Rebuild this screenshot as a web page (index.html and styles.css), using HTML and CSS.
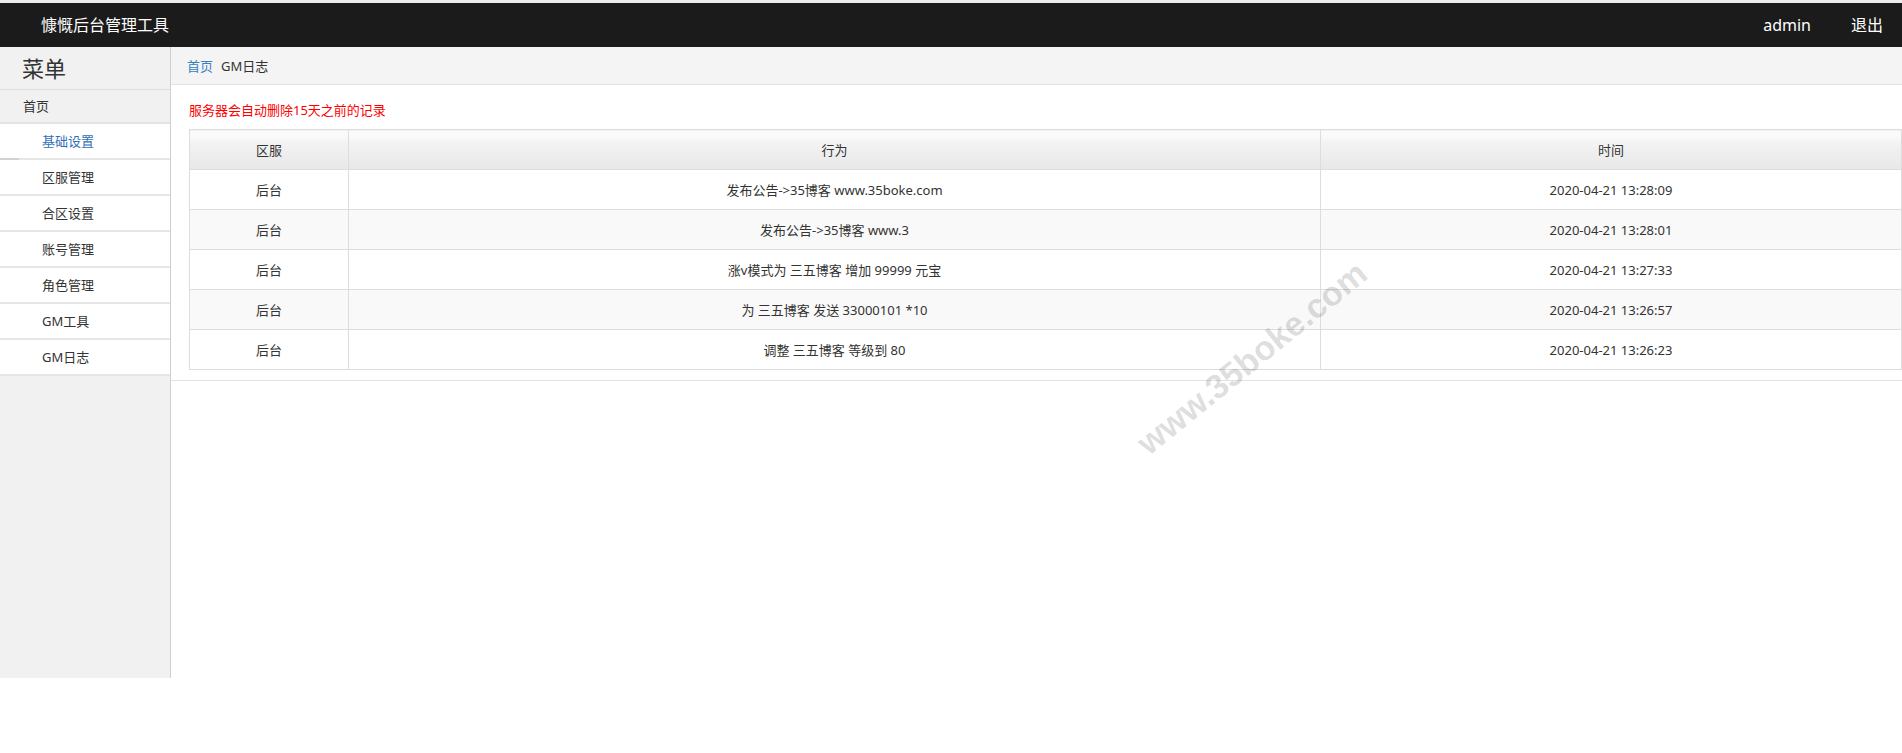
FILE: index.html
```html
<!DOCTYPE html>
<html lang="zh-CN">
<head>
<meta charset="utf-8">
<title>慷慨后台管理工具</title>
<link rel="stylesheet" href="styles.css">
</head>
<body>
<header class="topbar">
  <div class="brand">慷慨后台管理工具</div>
  <nav class="user-nav">
    <span class="user-name">admin</span>
    <a class="logout" href="#">退出</a>
  </nav>
</header>
<div class="layout">
  <aside class="sidebar">
    <div class="menu-title">菜单</div>
    <div class="menu-home">首页</div>
    <ul class="menu-list">
      <li class="menu-item active">基础设置</li>
      <li class="menu-item">区服管理</li>
      <li class="menu-item">合区设置</li>
      <li class="menu-item">账号管理</li>
      <li class="menu-item">角色管理</li>
      <li class="menu-item">GM工具</li>
      <li class="menu-item">GM日志</li>
    </ul>
  </aside>
  <main class="main">
    <div class="breadcrumb">
      <a class="crumb-link" href="#">首页</a>
      <span class="crumb-current">GM日志</span>
    </div>
    <section class="panel">
      <p class="notice">服务器会自动删除15天之前的记录</p>
      <table class="log-table">
        <thead>
          <tr>
            <th class="col-zone">区服</th>
            <th class="col-action">行为</th>
            <th class="col-time">时间</th>
          </tr>
        </thead>
        <tbody>
          <tr><td>后台</td><td>发布公告-&gt;35博客 www.35boke.com</td><td>2020-04-21 13:28:09</td></tr>
          <tr><td>后台</td><td>发布公告-&gt;35博客 www.3</td><td>2020-04-21 13:28:01</td></tr>
          <tr><td>后台</td><td>涨v模式为 三五博客 增加 99999 元宝</td><td>2020-04-21 13:27:33</td></tr>
          <tr><td>后台</td><td>为 三五博客 发送 33000101 *10</td><td>2020-04-21 13:26:57</td></tr>
          <tr><td>后台</td><td>调整 三五博客 等级到 80</td><td>2020-04-21 13:26:23</td></tr>
        </tbody>
      </table>
    </section>
  </main>
</div>
<div class="watermark">www.35boke.com</div>
</body>
</html>
```

FILE: styles.css
```css
* {
  box-sizing: border-box;
}

html, body {
  margin: 0;
  padding: 0;
  background: #ffffff;
}

body {
  font-family: "Noto Sans", "Noto Sans CJK SC", sans-serif;
  font-size: 13px;
  color: #333333;
  border-top: 3px solid #ececec;
  position: relative;
  min-height: 750px;
}

a {
  text-decoration: none;
}

.topbar {
  height: 44px;
  background: #1b1b1b;
  color: #ffffff;
  display: flex;
  align-items: center;
  justify-content: space-between;
  padding: 0 19px 0 41px;
}

.brand {
  font-size: 16px;
  line-height: 20px;
}

.user-nav {
  display: flex;
  align-items: center;
  gap: 40px;
  font-size: 16px;
  line-height: 20px;
}

.logout {
  color: #ffffff;
}

.layout {
  display: flex;
  align-items: flex-start;
}

.sidebar {
  width: 171px;
  flex: none;
  height: 631px;
  background: #f1f1f1;
  border-right: 1px solid #cfcfcf;
}

.menu-title {
  height: 43px;
  line-height: 42px;
  font-size: 22px;
  padding-left: 22px;
  border-bottom: 1px solid #dedede;
}

.menu-home {
  height: 34px;
  line-height: 32px;
  padding-left: 23px;
  border-bottom: 2px solid #e4e4e4;
}

.menu-list {
  list-style: none;
  margin: 0;
  padding: 0;
}

.menu-item {
  position: relative;
  height: 36px;
  line-height: 34px;
  padding-left: 42px;
  background: #ffffff;
  border-bottom: 2px solid #e6e6e6;
}

.menu-item.active {
  color: #2f6fb6;
}

.menu-item.active::after {
  content: "";
  position: absolute;
  left: 0;
  bottom: -2px;
  width: 19px;
  height: 2px;
  background: #d2d2d2;
}

.main {
  flex: 1;
  min-width: 0;
}

.breadcrumb {
  height: 38px;
  background: #f4f4f4;
  border-bottom: 1px solid #e2e2e2;
  display: flex;
  align-items: center;
  gap: 8px;
  padding-left: 16px;
}

.crumb-link {
  color: #3a7fc0;
}

.crumb-current {
  color: #333333;
}

.panel {
  padding: 16px 0 10px 18px;
  border-bottom: 1px solid #e2e2e2;
}

.notice {
  margin: 0 0 10px 0;
  line-height: 18px;
  color: #ff0000;
}

.log-table {
  width: 100%;
  border-collapse: collapse;
  table-layout: fixed;
  border: 1px solid #dddddd;
}

.log-table th,
.log-table td {
  border: 1px solid #dddddd;
  height: 40px;
  padding: 0;
  text-align: center;
  font-weight: normal;
  vertical-align: middle;
}

.log-table th {
  background: linear-gradient(#fafafa 0, #fafafa 6px, #f3f3f3 12px, #e8e8e8 100%);
}

.col-zone {
  width: 159px;
}

.col-action {
  width: 972px;
}

.log-table tbody tr:nth-child(even) td {
  background: #f9f9f9;
}

.watermark {
  position: absolute;
  left: 1252px;
  top: 355px;
  transform: translate(-50%, -50%) rotate(-39deg);
  font-family: "Liberation Sans", Arial, sans-serif;
  font-weight: bold;
  font-size: 34px;
  color: rgba(0, 0, 0, 0.15);
  white-space: nowrap;
  pointer-events: none;
}
```
